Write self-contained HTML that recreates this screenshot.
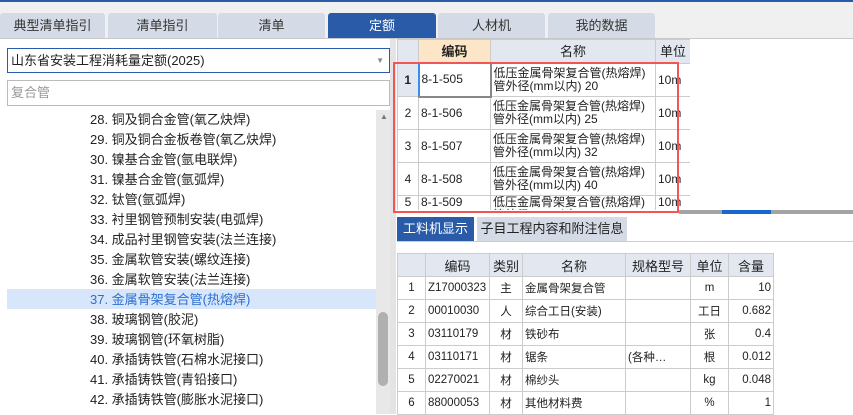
<!DOCTYPE html>
<html><head><meta charset="utf-8"><style>
*{margin:0;padding:0;box-sizing:border-box}
body{width:853px;height:414px;overflow:hidden;background:#fff;font-family:"Liberation Sans","Noto Sans CJK SC",sans-serif;font-size:13px;color:#222;position:relative}
.a{position:absolute}
.tab{position:absolute;top:13px;height:25px;background:#d5dbe6;border-radius:3px 3px 0 0;text-align:center;line-height:25px;font-size:13px;color:#333}
.tab.on{background:#2a5ba8;color:#fff}
.li{position:absolute;left:90px;font-size:13px;line-height:20px;color:#222}
table{border-collapse:collapse;position:absolute;table-layout:fixed}
td{border:1px solid #ccc;padding:0 2px;overflow:hidden;white-space:nowrap}
.t1 td{font-family:"Liberation Sans","Noto Sans CJK SC",sans-serif;font-size:12px;line-height:13px;vertical-align:middle}
.t1 .h td{background:#e3e8f0;text-align:center;font-size:13px}
.t2 td{font-size:11.5px;height:23px;font-family:"Liberation Sans","Noto Sans CJK SC",sans-serif}
.t2 .h td{background:#e3e8f0;text-align:center;font-size:13px}
.c{text-align:center}.r{text-align:right}
</style></head><body>
<div class="a" style="left:0;top:0;width:853px;height:2px;background:#2a5ba8"></div>
<div class="a" style="left:0;top:2px;width:853px;height:36px;background:#f0f0f0"></div>
<div class="tab" style="left:0;width:105px">典型清单指引</div>
<div class="tab" style="left:108px;width:109px">清单指引</div>
<div class="tab" style="left:218px;width:107px">清单</div>
<div class="tab on" style="left:328px;width:108px">定额</div>
<div class="tab" style="left:438px;width:107px">人材机</div>
<div class="tab" style="left:548px;width:107px">我的数据</div>
<div class="a" style="left:0;top:38px;width:853px;height:1px;background:#c8c8c8"></div>

<div class="a" style="left:7px;top:48px;width:383px;height:25px;border:1px solid #2a5ba8;line-height:23px;padding-left:3px;font-size:13px">山东省安装工程消耗量定额(2025)<span style="position:absolute;right:5px;top:0;font-size:8px;color:#888">▼</span></div>
<div class="a" style="left:7px;top:80px;width:383px;height:26px;border:1px solid #bbb;line-height:24px;padding-left:3px;color:#999">复合管</div>
<div class="a" style="left:376px;top:110px;width:14px;height:304px;background:#e8e8e8"></div>
<div class="a" style="left:380px;top:112px;font-size:8px;color:#777">▲</div>
<div class="a" style="left:378px;top:312px;width:10px;height:74px;background:#b0b0b0;border-radius:5px"></div>
<div class="a" style="left:7px;top:289px;width:369px;height:20px;background:#d7e6fb"></div>
<div class="li" style="top:110px">28. 铜及铜合金管(氧乙炔焊)</div>
<div class="li" style="top:130px">29. 铜及铜合金板卷管(氧乙炔焊)</div>
<div class="li" style="top:150px">30. 镍基合金管(氩电联焊)</div>
<div class="li" style="top:170px">31. 镍基合金管(氩弧焊)</div>
<div class="li" style="top:190px">32. 钛管(氩弧焊)</div>
<div class="li" style="top:210px">33. 衬里钢管预制安装(电弧焊)</div>
<div class="li" style="top:230px">34. 成品衬里钢管安装(法兰连接)</div>
<div class="li" style="top:250px">35. 金属软管安装(螺纹连接)</div>
<div class="li" style="top:270px">36. 金属软管安装(法兰连接)</div>
<div class="li" style="top:290px;color:#2a6fd0">37. 金属骨架复合管(热熔焊)</div>
<div class="li" style="top:310px">38. 玻璃钢管(胶泥)</div>
<div class="li" style="top:330px">39. 玻璃钢管(环氧树脂)</div>
<div class="li" style="top:350px">40. 承插铸铁管(石棉水泥接口)</div>
<div class="li" style="top:370px">41. 承插铸铁管(青铅接口)</div>
<div class="li" style="top:390px">42. 承插铸铁管(膨胀水泥接口)</div>

<div class="a" style="left:390px;top:39px;width:6px;height:375px;background:#e4e4e4"></div>

<div class="a" style="left:397px;top:39px;width:293px;height:171px;overflow:hidden">
<table class="t1" style="left:0;top:0;width:293px">
<colgroup><col style="width:21px"><col style="width:72px"><col style="width:165px"><col style="width:35px"></colgroup>
<tr class="h" style="height:24px"><td></td><td style="background:#fde6c8;font-weight:bold">编码</td><td>名称</td><td>单位</td></tr>
<tr style="height:33px"><td class="c" style="background:#e3e8f0;font-weight:bold">1</td><td style="border-left:2px solid #3a8ee8;border-bottom:2px solid #888;border-right:2px solid #888">8-1-505</td><td>低压金属骨架复合管(热熔焊)<br>管外径(mm以内) 20</td><td>10m</td></tr>
<tr style="height:33px"><td class="c">2</td><td>8-1-506</td><td>低压金属骨架复合管(热熔焊)<br>管外径(mm以内) 25</td><td>10m</td></tr>
<tr style="height:33px"><td class="c">3</td><td>8-1-507</td><td>低压金属骨架复合管(热熔焊)<br>管外径(mm以内) 32</td><td>10m</td></tr>
<tr style="height:33px"><td class="c">4</td><td>8-1-508</td><td>低压金属骨架复合管(热熔焊)<br>管外径(mm以内) 40</td><td>10m</td></tr>
<tr style="height:33px"><td class="c" style="vertical-align:top">5</td><td style="vertical-align:top">8-1-509</td><td style="vertical-align:top">低压金属骨架复合管(热熔焊)<br>管外径(mm以内) 50</td><td style="vertical-align:top">10m</td></tr>
</table></div>
<div class="a" style="left:393px;top:62px;width:286px;height:151px;border:2px solid #f25555"></div>
<div class="a" style="left:679px;top:210px;width:174px;height:4px;background:#a3a3a3"></div>
<div class="a" style="left:722px;top:210px;width:49px;height:4px;background:#1a66d0"></div>

<div class="a" style="left:397px;top:217px;width:77px;height:24px;background:#2a5ba8;color:#fff;text-align:center;line-height:24px">工料机显示</div>
<div class="a" style="left:477px;top:217px;width:150px;height:24px;background:#d5dbe6;text-align:center;line-height:24px">子目工程内容和附注信息</div>
<div class="a" style="left:397px;top:241px;width:456px;height:1px;background:#ccc"></div>

<table class="t2" style="left:397px;top:253px;width:376px">
<colgroup><col style="width:28px"><col style="width:64px"><col style="width:33px"><col style="width:103px"><col style="width:65px"><col style="width:38px"><col style="width:45px"></colgroup>
<tr class="h"><td></td><td>编码</td><td>类别</td><td>名称</td><td>规格型号</td><td>单位</td><td>含量</td></tr>
<tr><td class="c">1</td><td>Z17000323</td><td class="c">主</td><td>金属骨架复合管</td><td></td><td class="c">m</td><td class="r">10</td></tr>
<tr><td class="c">2</td><td>00010030</td><td class="c">人</td><td>综合工日(安装)</td><td></td><td class="c">工日</td><td class="r">0.682</td></tr>
<tr><td class="c">3</td><td>03110179</td><td class="c">材</td><td>铁砂布</td><td></td><td class="c">张</td><td class="r">0.4</td></tr>
<tr><td class="c">4</td><td>03110171</td><td class="c">材</td><td>锯条</td><td>(各种…</td><td class="c">根</td><td class="r">0.012</td></tr>
<tr><td class="c">5</td><td>02270021</td><td class="c">材</td><td>棉纱头</td><td></td><td class="c">kg</td><td class="r">0.048</td></tr>
<tr><td class="c">6</td><td>88000053</td><td class="c">材</td><td>其他材料费</td><td></td><td class="c">%</td><td class="r">1</td></tr>
</table>
</body></html>
